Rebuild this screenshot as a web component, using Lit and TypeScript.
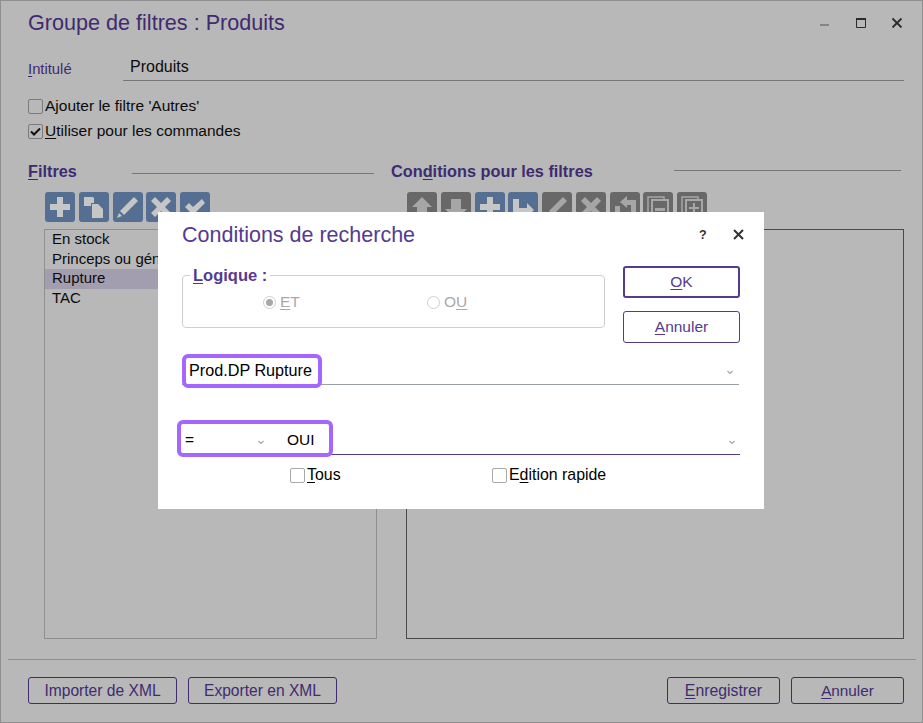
import { LitElement, html, css, svg } from "lit";
import { customElement } from "lit/decorators.js";

const G: Record<string, any> = {
  plus: svg`<path d="M12 5h6v7h7v6h-7v7h-6v-7H5v-6h7z"/>`,
  copy: svg`<path d="M5 5h9l1 1v5h-3v3H5z"/><path d="M13 12h6l5 5v9H13z"/>`,
  pen: svg`<path d="M21 5l4 4L11 23l-4-4z"/><path d="M6 21l3 3-5 2z"/>`,
  x: svg`<path d="M9 5l6 6 6-6 4 4-6 6 6 6-4 4-6-6-6 6-4-4 6-6-6-6z"/>`,
  check: svg`<path d="M5 15l4-4 4 4 9-8 3 4-12 12z"/>`,
  up: svg`<path d="M15 5l10 10h-5v11H10V15H5z"/>`,
  down: svg`<path d="M10 7h10v10h6L15 28 4 17h6z"/>`,
  sub: svg`<path d="M5 7h6v9h8v-5l7 7-7 7v-4H5z"/>`,
  undo: svg`<path d="M5 14h5v12H5z"/><path d="M10 10l7-6v4h9v18h-5V13h-4v3z"/>`,
  dminus: svg`<path d="M5 8V5h16v2M5 5v20h3" fill="none" stroke="currentColor" stroke-width="1.500"/><path d="M9 11V8h16v18H9z" fill="none" stroke="currentColor" stroke-width="2"/><path d="M12 16h10v3H12z"/>`,
  dplus: svg`<path d="M5 8V5h16v2M5 5v20h3" fill="none" stroke="currentColor" stroke-width="1.500"/><path d="M9 11V8h16v18H9z" fill="none" stroke="currentColor" stroke-width="2"/><path d="M16 11h2v4h4v2h-4v4h-2v-4h-4v-2h4z"/>`,
};

const tool = (name: string, kind: string) => html`<span class="tool ${kind}"><svg viewBox="0 0 30 30" width="30" height="30" fill="currentColor">${G[name]}</svg></span>`;
const chevron = html`<svg class="chev" viewBox="0 0 8 5" width="8" height="5"><path d="M1.500 1l2.500 2.500L6.500 1" fill="none" stroke="currentColor" stroke-width="1.200"/></svg>`;

@customElement("app-root")
export class AppRoot extends LitElement {
  static styles = css`
    :host { display: block; width: 923px; height: 723px; overflow: hidden; font-family: "Liberation Sans", Arial, sans-serif; font-size: 15.500px; color: #000; }
    * { box-sizing: border-box; }
    .win { position: relative; width: 923px; height: 723px; background: #b8b8b8; border: 1px solid #8f8f8f; display: flex; flex-direction: column; color: #0b0b0b; }
    .head { height: 42px; padding: 0 0 0 27px; display: flex; align-items: center; justify-content: space-between; flex: none; }
    .title { font-size: 21.600px; color: #3f2b70; margin-top: 2px; }
    .wctl { display: flex; align-items: center; gap: 25px; padding-right: 19px; color: #2b2b2b; }
    .wctl svg { display: block; }
    .wctl .mn { margin-right: 1px; color: #858585; }
    .name { display: flex; height: 38px; margin: 0 18px 0 27px; flex: none; }
    .name label { width: 95px; color: #3f2b70; font-size: 14.800px; align-self: flex-end; padding-bottom: 4px; }
    .name .field { flex: 1; border-bottom: 1px solid #77777b; padding-left: 7px; display: flex; align-items: flex-end; padding-bottom: 4px; font-size: 16px; }
    .checks { margin: 16px 0 0 27px; display: flex; flex-direction: column; gap: 7px; flex: none; }
    .ck { display: flex; align-items: center; height: 18px; }
    .box { width: 15px; height: 15px; border: 1px solid #7c7c7c; border-radius: 2px; margin-right: 2px; flex: none; display: flex; align-items: center; justify-content: center; }
    .main { display: flex; margin: 19px 0 0 27px; gap: 14px; flex: none; }
    .col { display: flex; flex-direction: column; }
    .col.l { width: 349px; }
    .col.r { width: 513px; }
    .sec { height: 24px; display: flex; align-items: center; font-weight: 700; font-size: 16.300px; color: #3f2b70; }
    .l .sec b { width: 104px; font-weight: 700; }
    .r .sec b { width: 283px; font-weight: 700; }
    .sec i { height: 1px; background: #77777b; display: block; }
    .l .sec i { width: 242px; margin-top: 4px; }
    .r .sec i { width: 227px; margin-top: -2px; }
    .tools { display: flex; margin-top: 9px; height: 30px; gap: 3.750px; }
    .l .tools { margin-left: 17px; }
    .r .tools { margin-left: 16px; }
    .tool { width: 30px; height: 30px; border-radius: 3px; display: block; color: #c6c6c6; }
    .tool.b { background: #556f93; }
    .tool.g { background: #686868; color: #a6a6a6; }
    .tool svg { display: block; }
    .list { margin: 7px 0 0 16px; height: 410px; border: 1px solid #8f8f8f; }
    .list div { height: 19.600px; line-height: 17.600px; padding-left: 7px; font-size: 15px; }
    .list .sel { background: #a39db0; }
    .panel { margin: 7px 0 0 15px; height: 410px; width: 498px; border: 1px solid #4a4a4a; }
    .sep { height: 1px; background: #8f8f8f; margin: 20px 6px 0 7px; flex: none; }
    .foot { display: flex; margin: 17px 18px 0 27px; gap: 11px; flex: none; }
    .foot .sp { flex: 1; }
    .btn { height: 27px; border: 1px solid #3f2b70; border-radius: 3px; color: #3f2b70; display: flex; align-items: center; justify-content: center; font-size: 15.600px; }
    .w148 { width: 149px; }
    .w112 { width: 113px; }
    .w112.big { font-size: 15.800px; }
    .w112.small { font-size: 15.300px; }

    .dlg { position: absolute; left: 157px; top: 211px; width: 606px; height: 297px; background: #fff; padding: 0 24px; display: flex; flex-direction: column; color: #000; }
    .dhead { height: 45px; display: flex; align-items: center; justify-content: space-between; flex: none; }
    .dtitle { font-size: 21.500px; color: #553a92; margin-top: 2px; }
    .dctl { display: flex; align-items: center; gap: 26px; color: #333; margin-right: -4px; }
    .dctl span { font-weight: 700; font-size: 12.500px; width: 8px; }
    .dctl svg { display: block; }
    .top { display: flex; gap: 18px; margin-top: 9px; flex: none; height: 77px; }
    fieldset { position: relative; margin: 9px 0 0 0; padding: 0; width: 423px; height: 53px; border: 1px solid #cfcfcf; border-radius: 4px; }
    legend { position: absolute; top: -10px; left: 7px; padding: 0 3px; background: #fff; font-weight: 700; font-size: 16.500px; color: #553a92; line-height: 18px; }
    .radios { display: flex; height: 100%; padding: 1px 0 0 80px; align-items: center; color: #a8a8a8; }
    .rd { display: flex; align-items: center; width: 164px; }
    .dot { width: 13px; height: 13px; border: 1px solid #cfcfcf; border-radius: 50%; margin-right: 4px; display: flex; align-items: center; justify-content: center; flex: none; }
    .dot::after { content: ""; width: 7px; height: 7px; border-radius: 50%; background: #a8a8a8; }
    .dot.off::after { display: none; }
    .side { display: flex; flex-direction: column; gap: 13px; width: 117px; }
    .dbtn { height: 32px; border: 1px solid #553a92; border-radius: 3px; color: #553a92; background: #fff; display: flex; align-items: center; justify-content: center; }
    .dbtn.def { border-width: 2px; }
    .sel1, .sel2 { position: relative; display: flex; align-items: center; flex: none; font-size: 16.200px; }
    .sel1 { margin-top: 14px; height: 28px; width: 557px; border-bottom: 1px solid #9aa0a4; padding-left: 7px; }
    .sel2 { margin-top: 42px; height: 28px; width: 558px; border-bottom: 1px solid #553a92; font-size: 15.500px; }
    .sel2 > span { margin-top: -1px; }
    .chev { color: #a5a5a5; display: block; }
    .sel1 .chev { position: absolute; right: 5px; top: 13px; }
    .sel2 .end { position: absolute; right: 4px; top: 13px; margin: 0; }
    .sel2 .mid { position: absolute; left: 75px; top: 13px; margin: 0; }
    .eq { width: 105px; padding-left: 3px; }
    .hl { position: absolute; border: 4px solid #a566ff; border-radius: 6px; pointer-events: none; }
    .hl.a { left: 0; top: -3px; width: 140px; height: 34px; }
    .hl.b { left: -5px; top: -7px; width: 156px; height: 37px; }
    .opts { display: flex; margin: 11px 0 0 108px; flex: none; font-size: 15.900px; }
    .opts .ck { width: 202px; }
    .opts .box { border-color: #a8a8a8; }
    .opts .ck + .ck { width: auto; }
    u { text-underline-offset: 2px; text-decoration-thickness: 1px; }
  `;

  render() {
    return html`
      <div class="win">
        <div class="head">
          <div class="title">Groupe de filtres : Produits</div>
          <div class="wctl">
            <svg class="mn" width="10" height="10" viewBox="0 0 10 10"><path d="M0 8h9" stroke="currentColor" stroke-width="2" fill="none"/></svg>
            <svg width="10" height="12" viewBox="0 0 10 12"><path d="M.5 2.500h9v9h-9z" stroke="currentColor" stroke-width="1" fill="none"/><path d="M0 3h10" stroke="currentColor" stroke-width="2" fill="none"/></svg>
            <svg width="12" height="12" viewBox="0 0 12 12"><path d="M1.500 2.500l9 9M10.500 2.500l-9 9" stroke="currentColor" stroke-width="1.800" fill="none"/></svg>
          </div>
        </div>
        <div class="name"><label><u>I</u>ntitulé</label><div class="field">Produits</div></div>
        <div class="checks">
          <div class="ck"><span class="box"></span>Ajouter le filtre 'Autres'</div>
          <div class="ck"><span class="box"><svg width="11" height="9" viewBox="0 0 11 9"><path d="M1 4.500l3 3 6-6" fill="none" stroke="#111" stroke-width="2"/></svg></span><span><u>U</u>tiliser pour les commandes</span></div>
        </div>
        <div class="main">
          <div class="col l">
            <div class="sec"><b><u>F</u>iltres</b><i></i></div>
            <div class="tools">${tool("plus","b")}${tool("copy","b")}${tool("pen","b")}${tool("x","b")}${tool("check","b")}</div>
            <div class="list"><div>En stock</div><div>Princeps ou générique</div><div class="sel">Rupture</div><div>TAC</div></div>
          </div>
          <div class="col r">
            <div class="sec"><b>Con<u>d</u>itions pour les filtres</b><i></i></div>
            <div class="tools">${tool("up","g")}${tool("down","g")}${tool("plus","b")}${tool("sub","b")}${tool("pen","g")}${tool("x","g")}${tool("undo","g")}${tool("dminus","g")}${tool("dplus","g")}</div>
            <div class="panel"></div>
          </div>
        </div>
        <div class="sep"></div>
        <div class="foot">
          <div class="btn w148">Importer de XML</div>
          <div class="btn w148">Exporter en XML</div>
          <div class="sp"></div>
          <div class="btn w112 big"><span><u>E</u>nregistrer</span></div>
          <div class="btn w112 small"><span><u>A</u>nnuler</span></div>
        </div>

        <div class="dlg">
          <div class="dhead">
            <div class="dtitle">Conditions de recherche</div>
            <div class="dctl"><span>?</span>
              <svg width="11" height="11" viewBox="0 0 11 11"><path d="M1 1l9 9M10 1l-9 9" stroke="currentColor" stroke-width="2" fill="none"/></svg>
            </div>
          </div>
          <div class="top">
            <fieldset>
              <legend><u>L</u>ogique :</legend>
              <div class="radios">
                <div class="rd"><span class="dot"></span><span><u>E</u>T</span></div>
                <div class="rd"><span class="dot off"></span><span>O<u>U</u></span></div>
              </div>
            </fieldset>
            <div class="side">
              <div class="dbtn def"><span><u>O</u>K</span></div>
              <div class="dbtn"><span><u>A</u>nnuler</span></div>
            </div>
          </div>
          <div class="sel1">Prod.DP Rupture${chevron}<div class="hl a"></div></div>
          <div class="sel2">
            <span class="eq">=</span><span>OUI</span>
            <span class="mid">${chevron}</span><span class="end">${chevron}</span>
            <div class="hl b"></div>
          </div>
          <div class="opts">
            <div class="ck"><span class="box"></span><span><u>T</u>ous</span></div>
            <div class="ck"><span class="box"></span><span>E<u>d</u>ition rapide</span></div>
          </div>
        </div>
      </div>
    `;
  }
}
